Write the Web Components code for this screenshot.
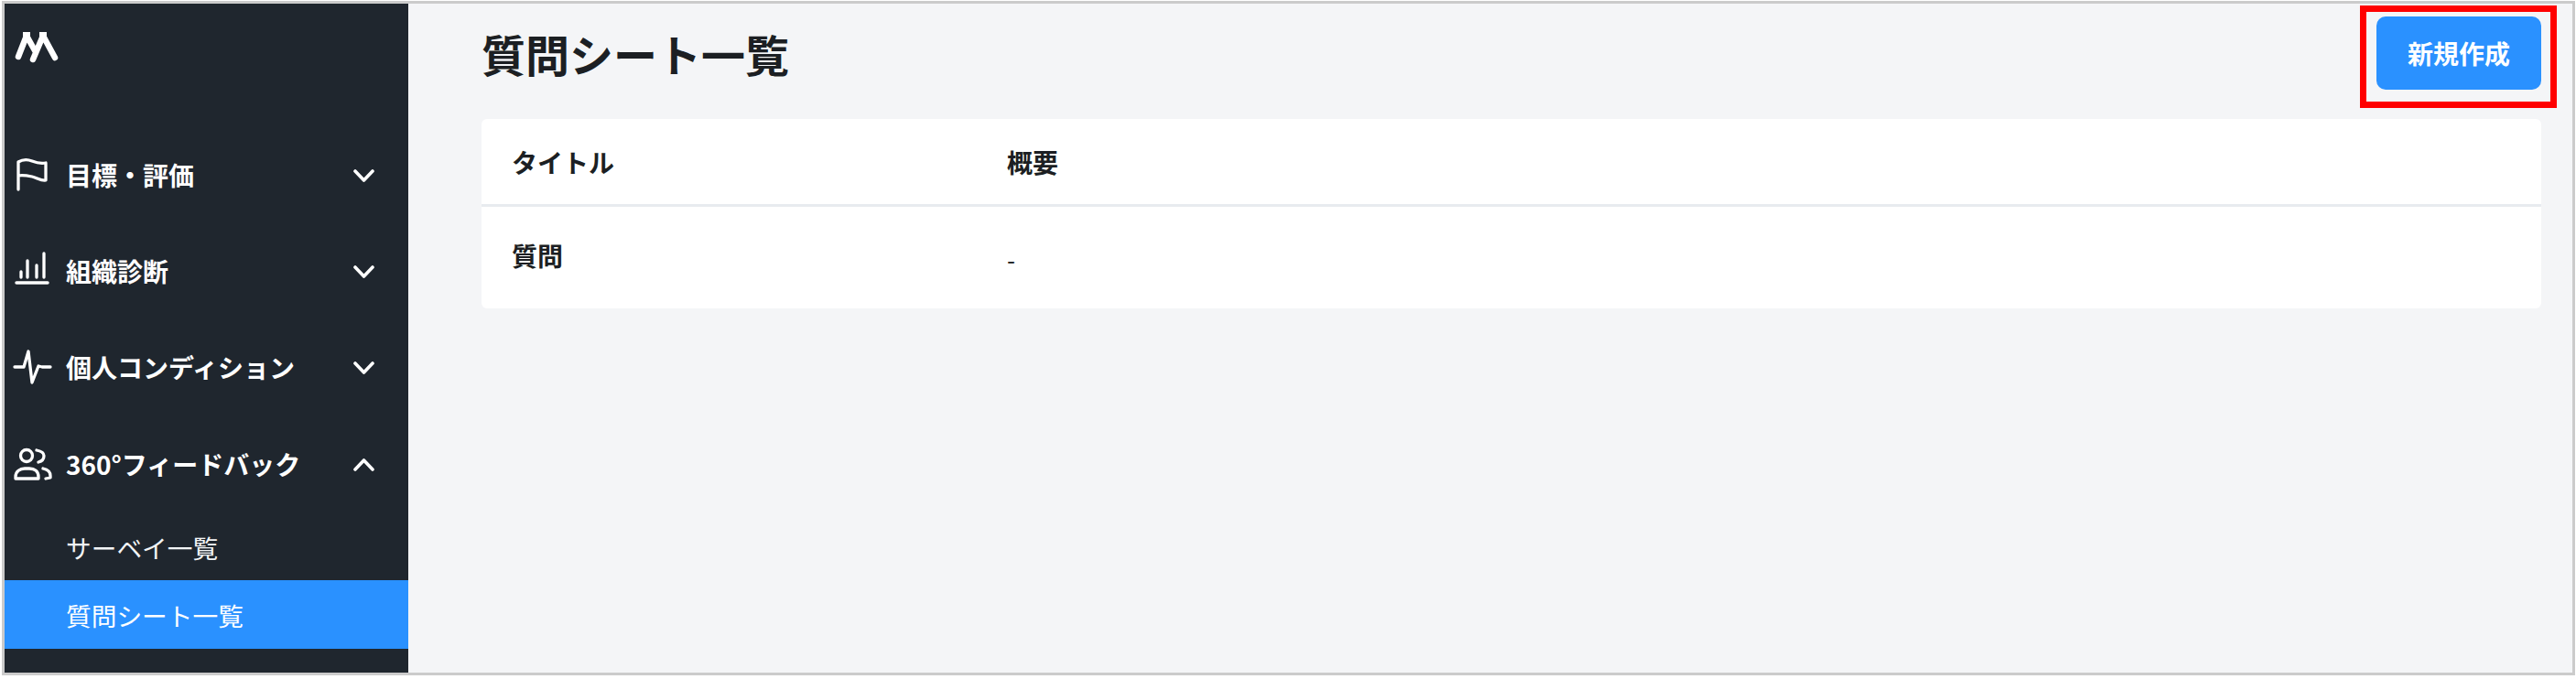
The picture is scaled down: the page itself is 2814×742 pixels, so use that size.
<!doctype html>
<html lang="ja">
<head>
<meta charset="utf-8">
<title>質問シート一覧</title>
<style>
  html, body { margin: 0; height: 100%; background: #fff; }
  body { font-family: "Noto Sans CJK JP", "Noto Sans", sans-serif; }
</style>
</head>
<body>
<app-frame>
  <side-nav slot="side">
    <nav-item icon="flag" label="目標・評価"></nav-item>
    <nav-item icon="chart" label="組織診断"></nav-item>
    <nav-item icon="pulse" label="個人コンディション"></nav-item>
    <nav-item icon="users" label="360°フィードバック" open></nav-item>
    <nav-sub>サーベイ一覧</nav-sub>
    <nav-sub active>質問シート一覧</nav-sub>
  </side-nav>
  <page-header title="質問シート一覧">
    <mark-box><app-button>新規作成</app-button></mark-box>
  </page-header>
  <sheet-table></sheet-table>
</app-frame>

<script>
const ICONS = {
  flag: `<path d="M5 34V4C10 1 15 1 20 3S30 6 35 5V24C30 25 25 21 20 20S10 18 5 19"/>`,
  chart: `<path d="M3 31H37" stroke-width="3.500"/><path d="M8 25V19M15 25V7M25 25V12M33 25V-1"/>`,
  pulse: `<path d="M1 18H11L16 1L20 35L27 17L31 18H40"/>`,
  users: `<circle cx="14" cy="9" r="6.500"/><path d="M2 34V32C2 26 7 23 12 23H17C23 23 27 26 27 32V34Z"/><path d="M25 3C30 4 33 6 33 9S31 15 27 16M32 23C37 24 40 27 40 31V33L35 34"/>`
}

class AppFrame extends HTMLElement {
  constructor() {
    super()
    this.attachShadow({ mode: "open" }).innerHTML = `
      <style>
        :host {
          display: flex;
          box-sizing: border-box;
          width: 2814px;
          height: 742px;
          padding: 1px 1px 4px 2px;
        }
        .inner {
          flex: 1;
          display: flex;
          border: 3px solid #cbcbcb;
          background: #f4f5f7;
          overflow: hidden;
        }
        main {
          flex: 1;
          min-width: 0;
          padding: 0 34px 0 80px;
        }
      </style>
      <div class="inner">
        <slot name="side"></slot>
        <main><slot></slot></main>
      </div>`
  }
}

class SideNav extends HTMLElement {
  constructor() {
    super()
    this.attachShadow({ mode: "open" }).innerHTML = `
      <style>
        :host {
          display: block;
          flex: none;
          width: 441px;
          background: #1f262e;
          color: #fff;
        }
        .logo {
          height: 135px;
          box-sizing: border-box;
          padding: 29px 0 0 10px;
        }
        svg { display: block; }
      </style>
      <div class="logo">
        <svg width="50" height="38" viewBox="0 0 50 38" fill="none" stroke="#fff" stroke-width="6.500" stroke-linejoin="round" stroke-linecap="round">
          <path d="M14 6L5 29M14 6L24 24M32 6L21 32M32 6L45 30"/>
          <path d="M14 2V8M32 2V8" stroke-width="8" stroke-linecap="butt"/>
        </svg>
      </div>
      <slot></slot>`
  }
}

class NavItem extends HTMLElement {
  connectedCallback() {
    if (this.shadowRoot) return
    const icon = ICONS[this.getAttribute("icon")]
    const chevron = this.hasAttribute("open") ? "M2 13L11.500 3L21 13" : "M2 3L11.500 13L21 3"
    this.attachShadow({ mode: "open" }).innerHTML = `
      <style>
        :host {
          display: flex;
          align-items: center;
          height: 105.33px;
          padding: 0 37px 0 10px;
          font-size: 28px;
          font-weight: 700;
        }
        .icon { flex: none; width: 42px; height: 38px; margin-right: 16px; overflow: visible; }
        .label { flex: 1; white-space: nowrap; margin: -2px 0 0 -1px; }
        .chev { flex: none; }
      </style>
      <svg class="icon" viewBox="0 0 42 38" fill="none" stroke="#fff" stroke-width="3.300" stroke-linecap="round" stroke-linejoin="round">${icon}</svg>
      <span class="label">${this.getAttribute("label")}</span>
      <svg class="chev" width="23" height="16" viewBox="0 0 23 16" fill="none" stroke="#fff" stroke-width="3.600" stroke-linecap="round" stroke-linejoin="round"><path d="${chevron}"/></svg>`
  }
}

class NavSub extends HTMLElement {
  constructor() {
    super()
    this.attachShadow({ mode: "open" }).innerHTML = `
      <style>
        :host {
          display: flex;
          align-items: center;
          box-sizing: border-box;
          height: 74px;
          padding: 1px 0 0 67px;
          font-size: 27.700px;
          font-weight: 400;
          color: #f2f4f6;
        }
        :host([active]) {
          height: 75px;
          padding-top: 0;
          background: #2a91ff;
          color: #fff;
        }
      </style>
      <slot></slot>`
  }
}

class PageHeader extends HTMLElement {
  connectedCallback() {
    if (this.shadowRoot) return
    this.attachShadow({ mode: "open" }).innerHTML = `
      <style>
        :host {
          display: flex;
          align-items: center;
          justify-content: space-between;
          box-sizing: border-box;
          height: 126px;
          padding: 14px 0 32px;
        }
        h1 {
          margin: 0;
          font-size: 48px;
          font-weight: 700;
          line-height: 80px;
          color: #1c1f23;
        }
      </style>
      <h1>${this.getAttribute("title")}</h1>
      <slot></slot>`
  }
}

// the red box is an annotation drawn over the screenshot, not part of the layout
class MarkBox extends HTMLElement {
  constructor() {
    super()
    this.attachShadow({ mode: "open" }).innerHTML = `
      <style>
        :host { display: block; position: relative; }
        .mark {
          position: absolute;
          inset: -12px -17px -20px -18px;
          border: 7px solid #f00;
          pointer-events: none;
        }
      </style>
      <slot></slot>
      <div class="mark"></div>`
  }
}

class AppButton extends HTMLElement {
  constructor() {
    super()
    this.attachShadow({ mode: "open" }).innerHTML = `
      <style>
        :host {
          display: flex;
          align-items: center;
          justify-content: center;
          width: 180px;
          height: 80px;
          border-radius: 10px;
          background: #2a91ff;
          color: #fff;
          font-size: 28px;
          font-weight: 700;
        }
      </style>
      <slot></slot>`
  }
}

class SheetTable extends HTMLElement {
  constructor() {
    super()
    this.attachShadow({ mode: "open" }).innerHTML = `
      <style>
        :host {
          display: block;
          border-radius: 6px;
          background: #fff;
          color: #1c1f23;
          font-size: 28px;
        }
        .row {
          display: grid;
          grid-template-columns: 541px 1fr;
          align-items: center;
          padding-left: 33px;
        }
        .head {
          height: 93px;
          border-bottom: 3px solid #e8ebef;
          font-weight: 700;
        }
        .body { height: 105px; padding-bottom: 6px; font-weight: 700; }
        .dash { font-weight: 400; font-size: 26px; padding-top: 8px; }
      </style>
      <div class="row head"><span>タイトル</span><span>概要</span></div>
      <div class="row body"><span>質問</span><span class="dash">-</span></div>`
  }
}

customElements.define("app-frame", AppFrame)
customElements.define("side-nav", SideNav)
customElements.define("nav-item", NavItem)
customElements.define("nav-sub", NavSub)
customElements.define("page-header", PageHeader)
customElements.define("mark-box", MarkBox)
customElements.define("app-button", AppButton)
customElements.define("sheet-table", SheetTable)
</script>
</body>
</html>
